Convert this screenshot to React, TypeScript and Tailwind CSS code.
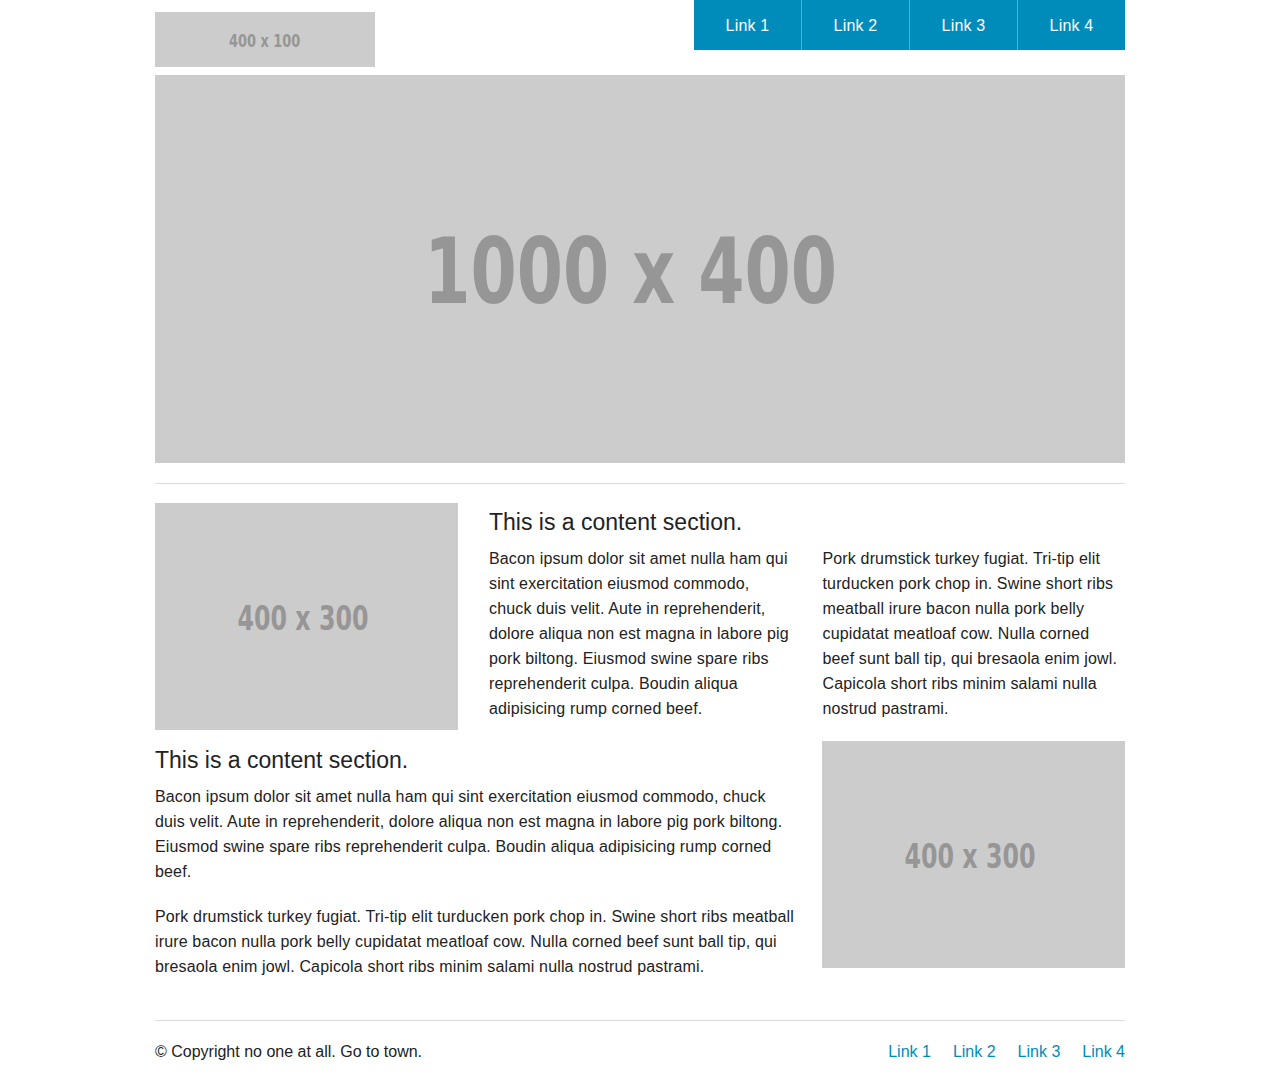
import React from 'react';

const navLinks = ['Link 1', 'Link 2', 'Link 3', 'Link 4'];

const bacon =
  'Bacon ipsum dolor sit amet nulla ham qui sint exercitation eiusmod commodo, chuck duis velit. Aute in reprehenderit, dolore aliqua non est magna in labore pig pork biltong. Eiusmod swine spare ribs reprehenderit culpa. Boudin aliqua adipisicing rump corned beef.';
const pork =
  'Pork drumstick turkey fugiat. Tri-tip elit turducken pork chop in. Swine short ribs meatball irure bacon nulla pork belly cupidatat meatloaf cow. Nulla corned beef sunt ball tip, qui bresaola enim jowl. Capicola short ribs minim salami nulla nostrud pastrami.';

const phFont = { fontFamily: '"DejaVu Sans", sans-serif' };

// grey placeholder box, like placehold.it
const Placeholder = ({ label, className, textClass }: { label: string; className: string; textClass: string }) => (
  <div className={`flex items-center justify-center bg-[#cccccc] ${className}`}>
    <span className={`inline-block font-bold text-[#969696] leading-none whitespace-nowrap ${textClass}`} style={phFont}>
      {label}
    </span>
  </div>
);

const App: React.FC = () => {
  return (
    <div
      className="min-h-[1084px] bg-white text-[#222222]"
      style={{ fontFamily: '"Liberation Sans", Arial, sans-serif' }}
    >
      <div className="mx-auto w-[970px]">
        {/* header */}
        <header className="flex items-start justify-between">
          <Placeholder label="400 x 100" className="mt-[12px] h-[55px] w-[220px]" textClass="text-[18px] scale-x-[0.72] translate-y-[1px]" />
          <nav className="flex h-[50px] bg-[#008cba]">
            {navLinks.map((l, i) => (
              <a
                key={l}
                href="#"
                className={`flex items-center justify-center pt-[2px] text-[16px] tracking-[0.2px] text-white ${
                  i > 0 ? 'w-[108px] border-l border-[#4fb0d5]' : 'w-[107px]'
                }`}
              >
                {l}
              </a>
            ))}
          </nav>
        </header>

        <Placeholder
          label="1000 x 400"
          className="mt-[8px] h-[388px] w-full"
          textClass="text-[91px] scale-x-[0.73] translate-y-[2px] -translate-x-[9px]"
        />

        <hr className="mt-[20px] mb-[19px] border-t border-[#dddddd]" />

        {/* row 1 */}
        <div className="grid grid-cols-[303px_302px_303px] gap-x-[31px]">
          <Placeholder label="400 x 300" className="h-[227px]" textClass="text-[33px] scale-x-[0.72] translate-y-[2px] -translate-x-[3px]" />
          <div className="col-span-2">
            <h3 className="mt-[5px] mb-[10px] text-[23px] leading-[28px]">This is a content section.</h3>
            <div className="grid grid-cols-2 gap-x-[31px]">
              <p className="mb-[20px] text-[16px] leading-[25px] tracking-[0.15px]">{bacon}</p>
              <p className="mb-[20px] text-[16px] leading-[25px] tracking-[0.15px]">{pork}</p>
            </div>
          </div>
        </div>

        {/* row 2 */}
        <div className="grid grid-cols-[303px_302px_303px] gap-x-[31px]">
          <div className="col-span-2 mr-[-6px]">
            <h3 className="mt-[5px] mb-[10px] text-[23px] leading-[28px]">This is a content section.</h3>
            <p className="mb-[20px] text-[16px] leading-[25px] tracking-[0.15px]">{bacon}</p>
            <p className="mb-[20px] text-[16px] leading-[25px] tracking-[0.15px]">{pork}</p>
          </div>
          <Placeholder label="400 x 300" className="h-[227px]" textClass="text-[33px] scale-x-[0.72] translate-y-[2px] -translate-x-[3px]" />
        </div>

        {/* footer */}
        <footer className="mt-[21px] border-t border-[#dddddd] pt-[18px]">
          <div className="flex items-center justify-between text-[16px] leading-[25px]">
            <p>© Copyright no one at all. Go to town.</p>
            <ul className="flex gap-[22px]">
              {navLinks.map((l) => (
                <li key={l}>
                  <a href="#" className="text-[#008cba]">
                    {l}
                  </a>
                </li>
              ))}
            </ul>
          </div>
        </footer>
      </div>
    </div>
  );
};

export default App;
